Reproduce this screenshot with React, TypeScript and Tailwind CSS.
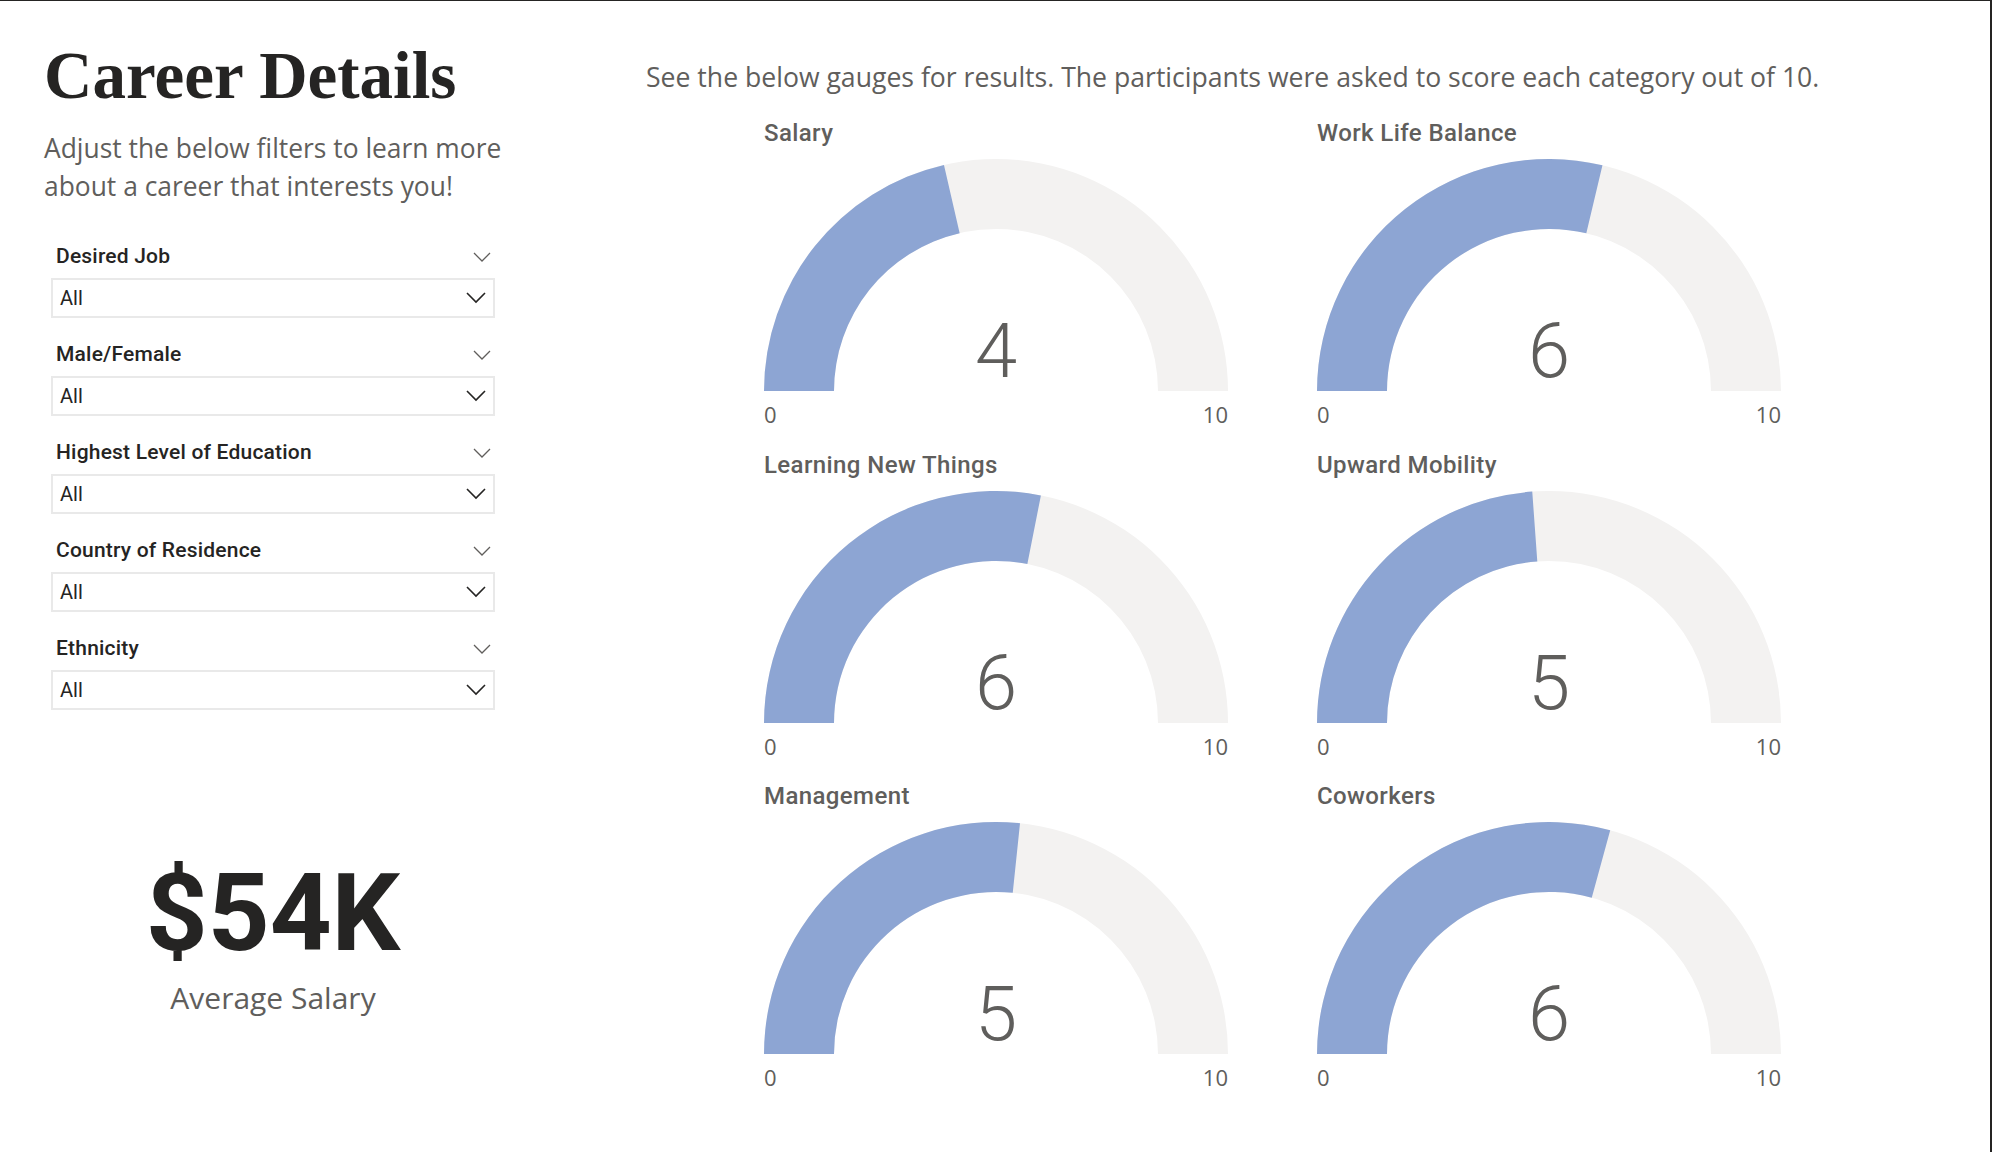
const gauges = [
  { title: "Salary", value: "4", frac: 0.428 },
  { title: "Work Life Balance", value: "6", frac: 0.574 },
  { title: "Learning New Things", value: "6", frac: 0.562 },
  { title: "Upward Mobility", value: "5", frac: 0.477 },
  { title: "Management", value: "5", frac: 0.533 },
  { title: "Coworkers", value: "6", frac: 0.585 },
];

const filters = ["Desired Job", "Male/Female", "Highest Level of Education", "Country of Residence", "Ethnicity"];

function arcPath(cx: number, cy: number, R: number, r: number, f: number) {
  const a = Math.PI * (1 - f);
  const xo = cx + R * Math.cos(a);
  const yo = cy - R * Math.sin(a);
  const xi = cx + r * Math.cos(a);
  const yi = cy - r * Math.sin(a);
  return `M ${cx - R} ${cy} A ${R} ${R} 0 0 1 ${xo} ${yo} L ${xi} ${yi} A ${r} ${r} 0 0 0 ${cx - r} ${cy} Z`;
}

function Chevron({ w, stroke, color }: { w: number; stroke: number; color: string }) {
  return (
    <svg width={w} height={w / 2 + 2} viewBox={`0 0 ${w} ${w / 2 + 2}`}>
      <polyline points={`1,1 ${w / 2},${w / 2} ${w - 1},1`} fill="none" stroke={color} strokeWidth={stroke} />
    </svg>
  );
}

function Gauge({ title, value, frac }: { title: string; value: string; frac: number }) {
  return (
    <div className="w-[464px] flex flex-col">
      <div className="h-[26px] text-[24px] leading-[26px] font-medium tracking-[0.4px] text-[#605e5c] font-['Roboto',sans-serif]">
        {title}
      </div>
      {/* gauge arc with the value laid over its centre */}
      <div className="relative mt-[13px] w-[464px] h-[232px]">
        <svg width={464} height={232} viewBox="0 0 464 232">
          <path d={arcPath(232, 232, 232, 162, 1)} fill="#f3f2f1" />
          <path d={arcPath(232, 232, 232, 162, frac)} fill="#8da5d3" />
        </svg>
        <div className="absolute left-0 right-0 top-[148px] text-center text-[76px] leading-[88px] font-light text-[#5f5e5c] font-['Roboto',sans-serif]">
          {value}
        </div>
      </div>
      <div className="mt-[10px] flex justify-between text-[22px] leading-[26px] text-[#605e5c] font-['Open_Sans',sans-serif]">
        <span>0</span>
        <span>10</span>
      </div>
    </div>
  );
}

export default function App() {
  return (
    <div className="w-[1992px] h-[1152px] bg-white border-t border-r-2 border-[#252423] flex overflow-hidden">
      {/* Left panel */}
      <div className="w-[600px] shrink-0 pl-[44px] pt-[41px] flex flex-col">
        <h1 className="text-[67px] leading-none font-bold text-[#252423] font-['Liberation_Serif',serif]">
          Career Details
        </h1>
        <p className="mt-[20px] w-[500px] text-[26.4px] leading-[38px] text-[#605e5c] font-['Open_Sans',sans-serif]">
          Adjust the below filters to learn more about a career that interests you!
        </p>

        <div className="ml-[7px] w-[444px] mt-[31px] flex flex-col gap-[16px] font-['Roboto',sans-serif]">
          {filters.map((f) => (
            <div key={f} className="flex flex-col">
              <div className="h-[42px] flex items-center justify-between pl-[5px] pr-[4px]">
                <span className="text-[21px] font-medium tracking-[0.2px] text-[#252423]">{f}</span>
                <Chevron w={18} stroke={1.3} color="#605e5c" />
              </div>
              <div className="h-[40px] border-2 border-[#e9e9e9] flex items-center justify-between pl-[7px] pr-[7px]">
                <span className="text-[20px] text-[#252423]">All</span>
                <Chevron w={20} stroke={1.6} color="#252423" />
              </div>
            </div>
          ))}
        </div>

        <div className="ml-[7px] w-[444px] mt-auto mb-[136px] flex flex-col items-center">
          <div className="text-[108px] leading-[124px] font-bold text-[#252423] font-['Roboto',sans-serif]">$54K</div>
          <div className="mt-[5px] text-[30px] leading-[36px] text-[#605e5c] font-['Open_Sans',sans-serif]">
            Average Salary
          </div>
        </div>
      </div>

      {/* Right panel */}
      <div className="flex-1 pl-[46px] pt-[59px] flex flex-col">
        <p className="text-[26.6px] leading-[34px] text-[#605e5c] font-['Open_Sans',sans-serif] whitespace-nowrap">
          See the below gauges for results. The participants were asked to score each category out of 10.
        </p>
        <div className="ml-[118px] mt-[26px] grid grid-cols-[464px_464px] gap-x-[89px] gap-y-[24.5px]">
          {gauges.map((g) => (
            <Gauge key={g.title} {...g} />
          ))}
        </div>
      </div>
    </div>
  );
}
